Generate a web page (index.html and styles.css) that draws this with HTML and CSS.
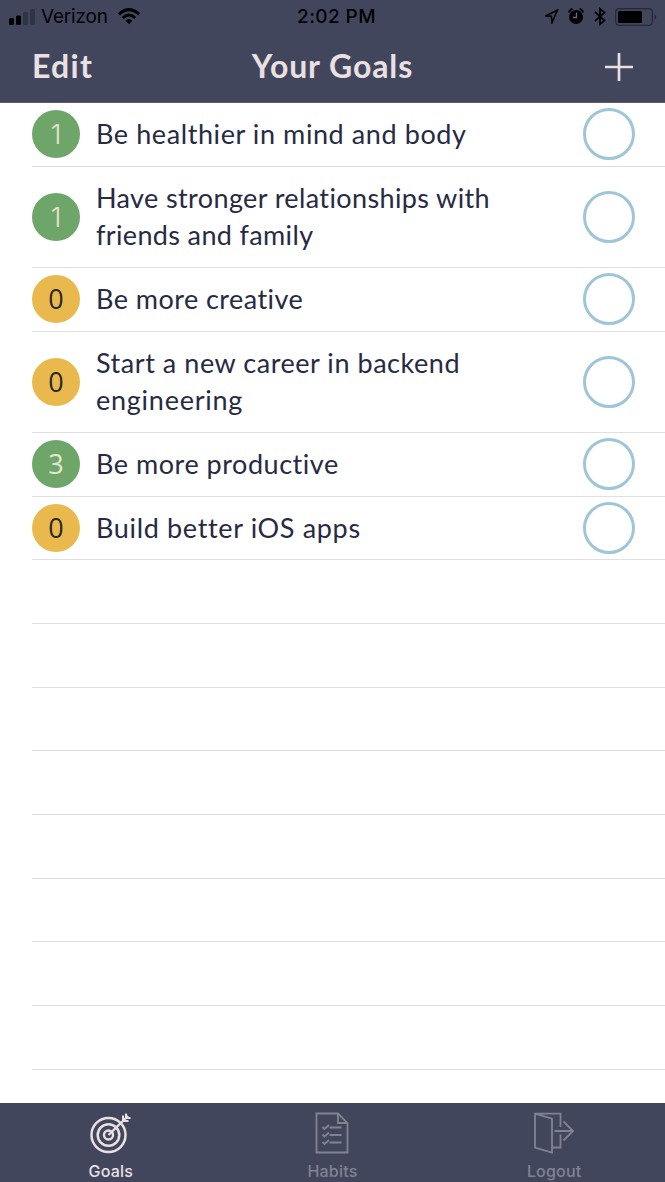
FILE: index.html
```html
<!DOCTYPE html>
<html lang="en">
<head>
<meta charset="utf-8">
<title>Your Goals</title>
<link rel="stylesheet" href="styles.css">
</head>
<body>
<div class="app">
  <header class="top">
    <div class="status">
      <div class="carrier">
        <svg class="signal" width="26" height="16" viewBox="0 0 26 16"><g fill="#000"><rect x="0" y="9" width="5" height="7" rx="1.5"/><rect x="7" y="6.500" width="5" height="9.500" rx="1.500"/></g><g fill="#000" opacity=".25"><rect x="14" y="3" width="5" height="13" rx="1.500"/><rect x="21" y="0" width="5" height="16" rx="1.500"/></g></svg>
        <span class="carrier-name">Verizon</span>
        <svg class="wifi" width="22" height="17" viewBox="0 0 22 17" fill="none" stroke="#000"><path d="M1 6.300Q11-3 21 6.300" stroke-width="3"/><path d="M4.700 10Q11 4 17.300 10" stroke-width="2.800"/><path d="M7.500 12.800Q11 9.300 14.500 12.800L11 16.300Z" fill="#000" stroke="none"/></svg>
      </div>
      <div class="time">2:02 PM</div>
      <div class="indicators">
        <svg width="15" height="15" viewBox="0 0 15 15" fill="none" stroke="#000" stroke-width="1.600" stroke-linejoin="miter"><path d="M13.400 1.200L1.500 7L7.300 7.300L8 13.500Z"/></svg>
        <svg width="16" height="17" viewBox="0 0 16 17"><circle cx="8" cy="9" r="7" fill="#000"/><path d="M1 4.500Q1.500 1.500 4.500 1M15 4.500Q14.500 1.500 11.500 1" fill="none" stroke="#000" stroke-width="2"/><path d="M8.500 4.500V9.500H5" fill="none" stroke="#666a80" stroke-width="1.300"/></svg>
        <svg width="12" height="19" viewBox="0 0 12 19" fill="none" stroke="#000" stroke-width="1.700"><path d="M1 5L10.500 13.500L6 17.200V1.800L10.500 5.500L1 14"/></svg>
        <svg width="42" height="18" viewBox="0 0 42 18"><rect x=".7" y=".7" width="36.600" height="16.600" rx="3.500" fill="none" stroke="#24283b" stroke-width="1.200"/><rect x="3" y="3" width="24" height="12" rx="1.500" fill="#000"/><path d="M39.500 6.200Q43 9 39.500 11.800Z" fill="#24283b"/></svg>
      </div>
    </div>
    <nav class="navbar">
      <span class="edit">Edit</span>
      <h1 class="title">Your Goals</h1>
      <svg class="add" width="28" height="28" viewBox="0 0 28 28" stroke="#e9e0e1" stroke-width="2.700"><path d="M0 14H28M14 0V28"/></svg>
    </nav>
  </header>
  <main class="list">
    <div class="row"><span class="badge green one">1</span><p class="goal"><span class="l1">Be healthier in mind and body</span></p><span class="ring"></span></div>
    <div class="row tall"><span class="badge green one">1</span><p class="goal"><span class="l2">Have stronger relationships with</span><br><span class="l3">friends and family</span></p><span class="ring"></span></div>
    <div class="row"><span class="badge amber">0</span><p class="goal"><span class="l4">Be more creative</span></p><span class="ring"></span></div>
    <div class="row tall"><span class="badge amber">0</span><p class="goal"><span class="l5">Start a new career in backend</span><br><span class="l6">engineering</span></p><span class="ring"></span></div>
    <div class="row"><span class="badge green">3</span><p class="goal"><span class="l7">Be more productive</span></p><span class="ring"></span></div>
    <div class="row short"><span class="badge amber">0</span><p class="goal"><span class="l8">Build better iOS apps</span></p><span class="ring"></span></div>
    <div class="row"></div>
    <div class="row"></div>
    <div class="row short"></div>
    <div class="row"></div>
    <div class="row"></div>
    <div class="row short"></div>
    <div class="row"></div>
    <div class="row"></div>
  </main>
  <footer class="tabs">
    <div class="tab active">
      <svg width="42" height="42" viewBox="0 0 42 42" fill="none" stroke="currentColor"><circle cx="18.500" cy="23" r="17" stroke-width="2.500"/><circle cx="18.500" cy="23" r="10.800" stroke-width="2.500"/><circle cx="18.500" cy="23" r="4.500" stroke-width="2.400"/><path d="M18.500 23L38 4" stroke-width="2.400"/><path d="M33 9V3.500M33 9H38.500M36 6V1.500M36 6H40.500" stroke-width="2"/></svg>
      <span>Goals</span>
    </div>
    <div class="tab">
      <svg width="42" height="42" viewBox="0 0 42 42" fill="none" stroke="currentColor" stroke-width="1.800"><path d="M5.500 1.500H27L36.500 11V40.500H5.500ZM27 1.500V11H36.500"/><path d="M18.500 15.500H30.500M18.500 23H30.500M18.500 30.500H30.500"/><path d="M11.500 15L13.500 17L18 13M11.500 22.500L13.500 24.500L18 20.500M11.500 30L13.500 32L18 28"/></svg>
      <span>Habits</span>
    </div>
    <div class="tab">
      <svg width="42" height="42" viewBox="0 0 42 42" fill="none" stroke="currentColor" stroke-width="1.800"><path d="M27.500 15V1.700H2V35.500L19 40.500V6.700L2 1.700M19 35.500H27.500V22.500"/><path d="M21.500 19H40M30.500 9.500L40 19L30.500 28.500"/></svg>
      <span>Logout</span>
    </div>
  </footer>
</div>
</body>
</html>
```
FILE: styles.css
```css
* { box-sizing: border-box; }
body { margin: 0; background: #fff; font-family: Lato, "Open Sans", sans-serif; }
.app { width: 665px; height: 1182px; display: flex; flex-direction: column; overflow: hidden; }
svg { display: block; flex: none; }

.top { height: 103px; flex: none; background: #42465d; border-bottom: 1px solid #5c5e70; }
.status { height: 33px; display: grid; grid-template-columns: 1fr auto 1fr; align-items: center; padding: 0 8px 0 9px; font-family: Inter, sans-serif; color: #000; }
.carrier { display: flex; align-items: center; }
.carrier-name { font-size: 19px; margin-left: 6px; width: 68px; letter-spacing: -0.2px; white-space: nowrap; }
.wifi { margin-left: 9px; }
.time { font-size: 19px; font-weight: 500; letter-spacing: 0.4px; margin-left: 7px; }
.indicators { display: flex; align-items: center; justify-content: flex-end; }
.indicators svg + svg { margin-left: 9.5px; }
.navbar { height: 65px; display: grid; grid-template-columns: 1fr auto 1fr; align-items: center; padding: 0 32px; color: #e9e0e1; }
.edit { font-size: 32px; font-weight: 700; line-height: 64px; letter-spacing: 1.3px; }
.title { margin: 0; font-size: 32px; font-weight: 700; line-height: 64px; letter-spacing: 0.9px; }
.add { justify-self: end; margin-top: 2px; }

.list { flex: 1; padding-left: 32px; }
.row { height: 64px; display: flex; align-items: center; padding: 0 30px 1px 0; border-bottom: 1px solid #dfdfe1; }
.row.tall { height: 101px; padding-bottom: 0; }
.row.short { height: 63px; padding-bottom: 0; }
.badge { width: 48px; height: 48px; flex: none; border-radius: 50%; display: grid; place-items: center; font: 400 27px/48px "Open Sans", sans-serif; }
.badge.one { font-family: Inter, sans-serif; font-weight: 300; font-size: 27px; line-height: 49px; }
.green { background: #6ea568; color: #e4e6cf; }
.amber { background: #e9b94e; color: #29292b; }
.goal { flex: 1; margin: 0 0 2px 16px; font-size: 27px; line-height: 37px; color: #272a43; white-space: nowrap; }
.l1 { letter-spacing: 0.59px; }
.l2 { letter-spacing: 0.38px; }
.l3 { letter-spacing: 0.35px; }
.l4 { letter-spacing: 0.45px; }
.l5 { letter-spacing: 0.55px; }
.l6 { letter-spacing: 0.75px; }
.l7 { letter-spacing: 0.53px; }
.l8 { letter-spacing: 0.66px; }
.ring { width: 52px; height: 52px; flex: none; border: 3px solid #9fc5d8; border-radius: 50%; }

.tabs { height: 79px; flex: none; display: grid; grid-template-columns: repeat(3, 1fr); background: #42465d; color: #818390; }
.tab { display: flex; flex-direction: column; align-items: center; padding-top: 9px; font: 500 16px/20px Inter, sans-serif; }
.tab span { margin-top: 7px; letter-spacing: 0.2px; }
.active { color: #e9e0e1; }
```
